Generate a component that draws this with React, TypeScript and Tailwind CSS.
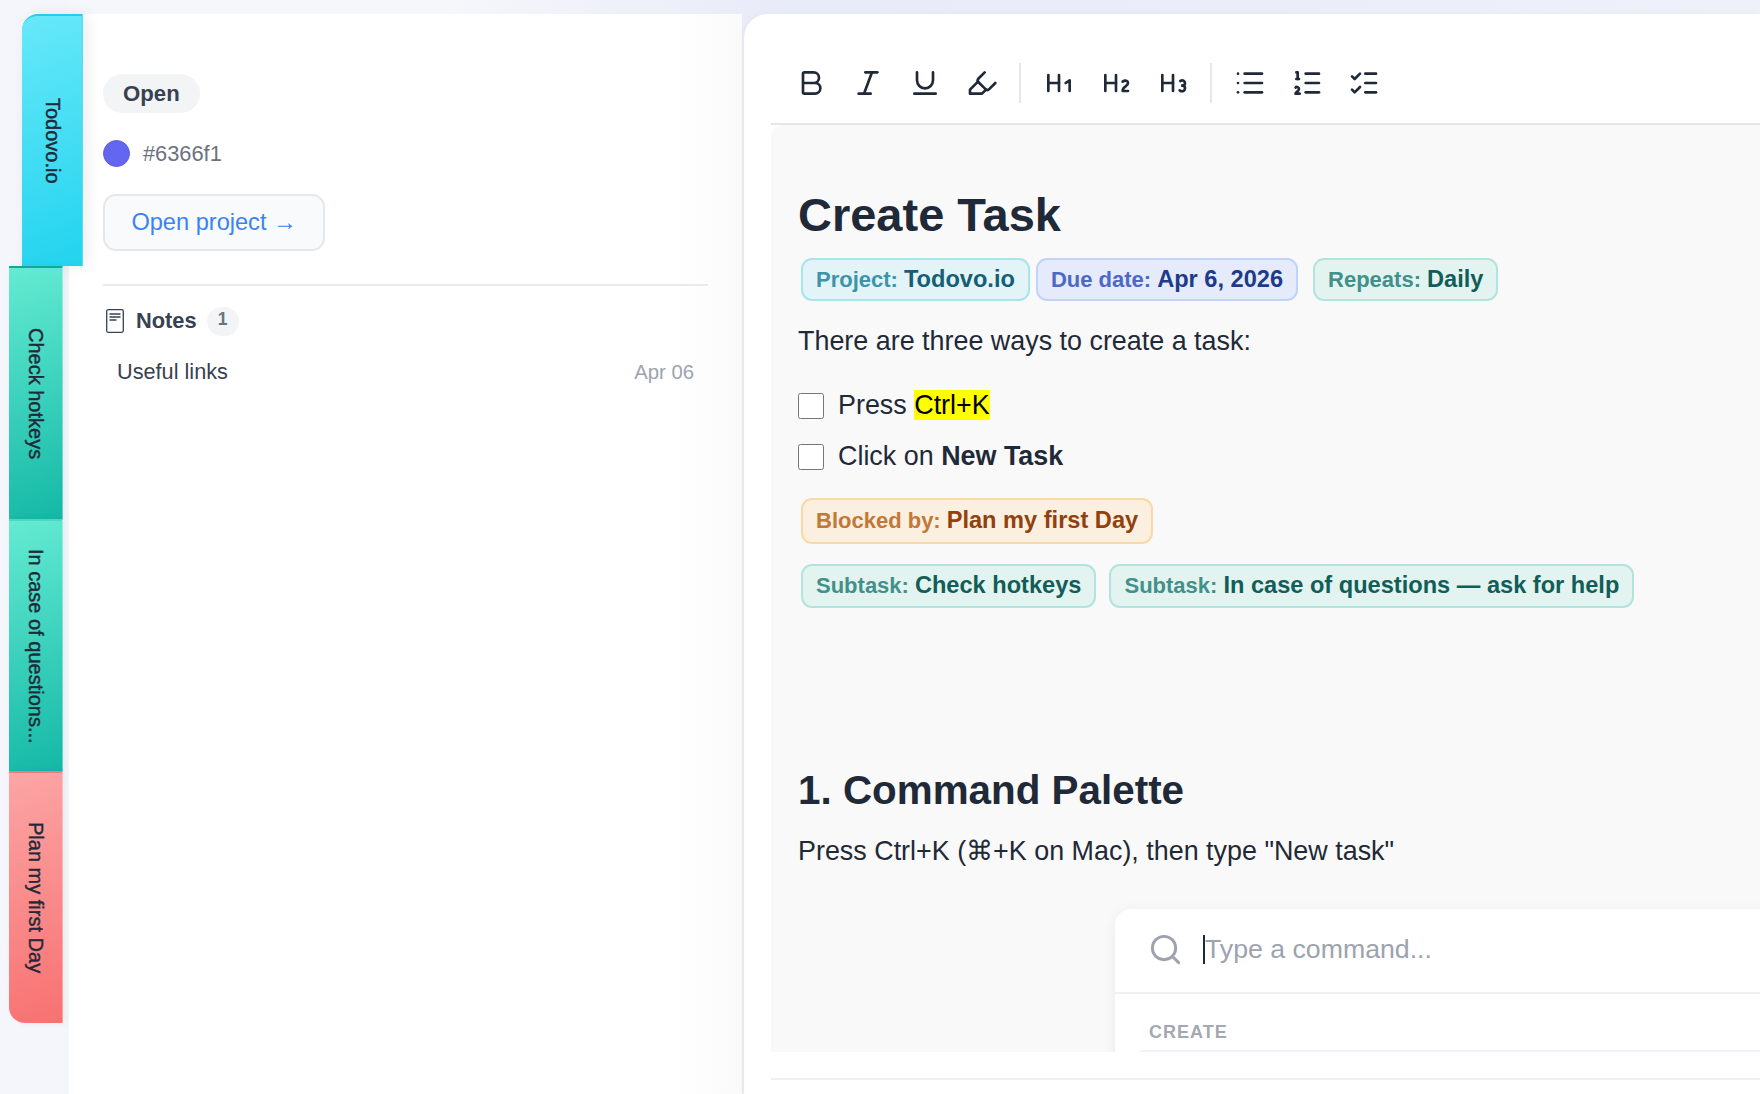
import type { ReactNode } from "react"
import { Bold, Italic, Underline, Highlighter, Heading1, Heading2, Heading3, List, ListOrdered, ListChecks, Search } from "lucide-react"

const tabs = [
  { label: "Check hotkeys", cls: "h-[253px] bg-linear-[160deg,#64ebd2,#14b8a6] border-t-[#14a898]" },
  { label: "In case of questions...", cls: "h-[252px] bg-linear-[160deg,#64ebd2,#14b8a6] border-t-[#4fd8c0]" },
  { label: "Plan my first Day", cls: "h-[252px] rounded-bl-[16px] bg-linear-[160deg,#fca5a5,#f87171] border-t-[#f27c7c]" },
]

function Chip({ label, value, cls, labelCls }: { label: string; value: string; cls: string; labelCls: string }) {
  return (
    <span className={`inline-flex items-center h-[43px] px-[13px] rounded-[11px] border-2 whitespace-nowrap ${cls}`}>
      <span className="text-[23.6px] font-bold">
        <span className={`mr-[6px] text-[22px] ${labelCls}`}>{label}</span>
        {value}
      </span>
    </span>
  )
}

const teal = "bg-[#e3f3f0] border-[#b0e5dd] text-[#115e59]"
const tealLabel = "text-[#42908a]"

function TodoRow({ children }: { children: ReactNode }) {
  return (
    <div className="flex items-center gap-[14px] h-[31px] text-[26.9px] text-[#1f2937]">
      <input type="checkbox" readOnly className="w-[26px] h-[26px] m-0 shrink-0" />
      <span>{children}</span>
    </div>
  )
}

function ToolButton({ children }: { children: ReactNode }) {
  return <div className="w-[57px] flex justify-center text-[#1f2937]">{children}</div>
}

export default function App() {
  return (
    <div className="h-[1094px] overflow-hidden flex bg-linear-to-r from-[#f6f7fb] from-25% via-[#e8ebf8] via-45% to-[#eef1fa] font-['Liberation_Sans',sans-serif]">
      {/* left tab strip */}
      <div className="w-[69px] shrink-0 pt-[14px] pl-[9px] flex flex-col items-start relative z-10 bg-[#f5f6fb]">
        <div className="ml-[13px] w-[61px] h-[252px] shrink-0 pl-[2px] rounded-tl-[16px] bg-linear-[160deg,#67e8f9,#22d3ee] border-t-2 border-t-[#22cfe8] border-r border-r-[#5fd8ea] shadow-[4px_0_14px_rgba(0,0,0,0.08)] flex items-center justify-center">
          <span className="[writing-mode:vertical-rl] text-[20px] text-[#1f2937] [-webkit-text-stroke:0.4px_#1f2937]">Todovo.io</span>
        </div>
        {tabs.map((t) => (
          <div key={t.label} className={`w-[54px] shrink-0 pl-px border-t-2 border-r border-r-white/30 shadow-[3px_0_8px_rgba(0,0,0,0.05)] flex items-center justify-center ${t.cls}`}>
            <span className="[writing-mode:vertical-rl] text-[20px] text-[#1f2937] [-webkit-text-stroke:0.4px_#1f2937]">{t.label}</span>
          </div>
        ))}
      </div>

      {/* project panel */}
      <div className="w-[673px] shrink-0 mt-[14px] bg-linear-to-r from-white from-90% to-[#fafafb] px-[34px] pt-[60px]">
        <span className="inline-flex items-center h-[39px] px-[20px] rounded-full bg-[#f3f4f6] text-[22.2px] font-bold text-[#374151]">Open</span>
        <div className="flex items-center gap-[13px] mt-[27px] h-[27px]">
          <span className="w-[27px] h-[27px] rounded-full bg-[#6366f1] border border-[#5a5de0]" />
          <span className="text-[21.8px] text-[#6b7280] relative top-px">#6366f1</span>
        </div>
        <div className="mt-[27px] inline-flex items-center justify-center w-[222px] h-[57px] pt-px rounded-[13px] border-2 border-[#e5e7eb] bg-[#f9fafb] text-[23.6px] text-[#3b82f6] whitespace-nowrap">Open project →</div>
        <div className="h-[2px] bg-[#e9eaec] mt-[33px]" />
        <div className="flex items-center mt-[20px] h-[30px] pl-[3px]">
          <svg width="18" height="24" viewBox="0 0 18 24" fill="none" stroke="#374151" strokeWidth="1.3">
            <rect x="0.7" y="0.7" width="16.6" height="22.6" rx="1.5" />
            <path d="M3.5 5h11M3.5 8h11M3.5 11h7" />
          </svg>
          <span className="ml-[12px] text-[21.8px] font-bold text-[#374151]">Notes</span>
          <span className="ml-[10px] w-[32px] h-[29px] rounded-full bg-[#f3f4f6] text-[17.5px] font-bold text-[#6b7280] flex items-center justify-center pb-[3px]">1</span>
        </div>
        <div className="flex items-center justify-between mt-[20px] h-[32px] px-[14px]">
          <span className="text-[21.7px] text-[#374151]">Useful links</span>
          <span className="text-[20.3px] text-[#9ca3af]">Apr 06</span>
        </div>
      </div>

      {/* editor panel */}
      <div className="flex-1 min-w-0 ml-[2px] mt-[14px] bg-white rounded-tl-[24px] pl-[27px] flex flex-col shadow-[-2px_0_6px_rgba(0,0,0,0.03)]">
        <div className="h-[111px] shrink-0 pl-[11px] pt-[29px] flex items-center border-b-2 border-[#e5e7eb]">
          <ToolButton><Bold size={32} /></ToolButton>
          <ToolButton><Italic size={32} /></ToolButton>
          <ToolButton><Underline size={32} /></ToolButton>
          <ToolButton><Highlighter size={32} /></ToolButton>
          <div className="w-[2px] h-[40px] bg-[#e5e7eb] mx-[9px]" />
          <ToolButton><Heading1 size={32} /></ToolButton>
          <ToolButton><Heading2 size={32} /></ToolButton>
          <ToolButton><Heading3 size={32} /></ToolButton>
          <div className="w-[2px] h-[40px] bg-[#e5e7eb] mx-[9px]" />
          <ToolButton><List size={32} /></ToolButton>
          <ToolButton><ListOrdered size={32} /></ToolButton>
          <ToolButton><ListChecks size={32} /></ToolButton>
        </div>

        <div className="h-[927px] shrink-0 overflow-hidden bg-[#f9f9f9] rounded-tl-[12px] pl-[27px] pt-[63px]">
          <h1 className="text-[47px] leading-[54px] font-bold text-[#1f2937]">Create Task</h1>
          <div className="flex mt-[16px] ml-[3px]">
            <Chip label="Project:" value="Todovo.io" cls="bg-[#e2f4f7] border-[#a8e4ec] text-[#155e75]" labelCls="text-[#3d93a8]" />
            <div className="w-[6px]" />
            <Chip label="Due date:" value="Apr 6, 2026" cls="bg-[#e5ebfa] border-[#bfd3fb] text-[#1e3a8a]" labelCls="text-[#4f67c5]" />
            <div className="w-[15px]" />
            <Chip label="Repeats:" value="Daily" cls={teal} labelCls={tealLabel} />
          </div>
          <p className="mt-[25px] text-[26.9px] leading-[31px] text-[#1f2937]">There are three ways to create a task:</p>
          <div className="mt-[33px] flex flex-col gap-[20px]">
            <TodoRow>Press <mark className="bg-[#ffff00] text-black">Ctrl+K</mark></TodoRow>
            <TodoRow>Click on <strong className="font-bold">New Task</strong></TodoRow>
          </div>
          <div className="mt-[26px] ml-[3px]">
            <Chip label="Blocked by:" value="Plan my first Day" cls="h-[46px] bg-[#fbefe0] border-[#fcd9a4] text-[#92400e]" labelCls="text-[#c27838]" />
          </div>
          <div className="mt-[20px] ml-[3px] flex gap-[13px]">
            <Chip label="Subtask:" value="Check hotkeys" cls={`h-[44px] ${teal}`} labelCls={tealLabel} />
            <Chip label="Subtask:" value="In case of questions — ask for help" cls={`h-[44px] ${teal}`} labelCls={tealLabel} />
          </div>
          <h2 className="mt-[159px] text-[40.4px] leading-[46px] font-bold text-[#1f2937]">1. Command Palette</h2>
          <p className="mt-[23px] text-[26.9px] leading-[31px] text-[#1f2937]">Press Ctrl+K (⌘+K on Mac), then type "New task"</p>

          <div className="mt-[42px] ml-[317px] w-[900px] bg-white rounded-tl-[16px] shadow-[0_2px_14px_rgba(0,0,0,0.06)]">
            <div className="h-[85px] pb-[2px] flex items-center pl-[33px] border-b-2 border-[#eef0f1]">
              <Search size={35} className="text-[#9ca3af]" />
              <span className="ml-[20px] w-[2px] h-[29px] bg-[#1f2937]" />
              <span className="text-[26.7px] text-[#9ca3af]">Type a command...</span>
            </div>
            <div className="pl-[34px] pt-[28px] text-[18px] leading-[21px] font-bold tracking-[1px] text-[#a3a9b3]">CREATE</div>
            <div className="ml-[19px] mt-[7px] h-[60px] rounded-t-[10px] bg-[#f3f0fb]" />
          </div>
        </div>

        <div className="h-[28px] shrink-0 border-b-2 border-[#eef0f1]" />
      </div>
    </div>
  )
}
